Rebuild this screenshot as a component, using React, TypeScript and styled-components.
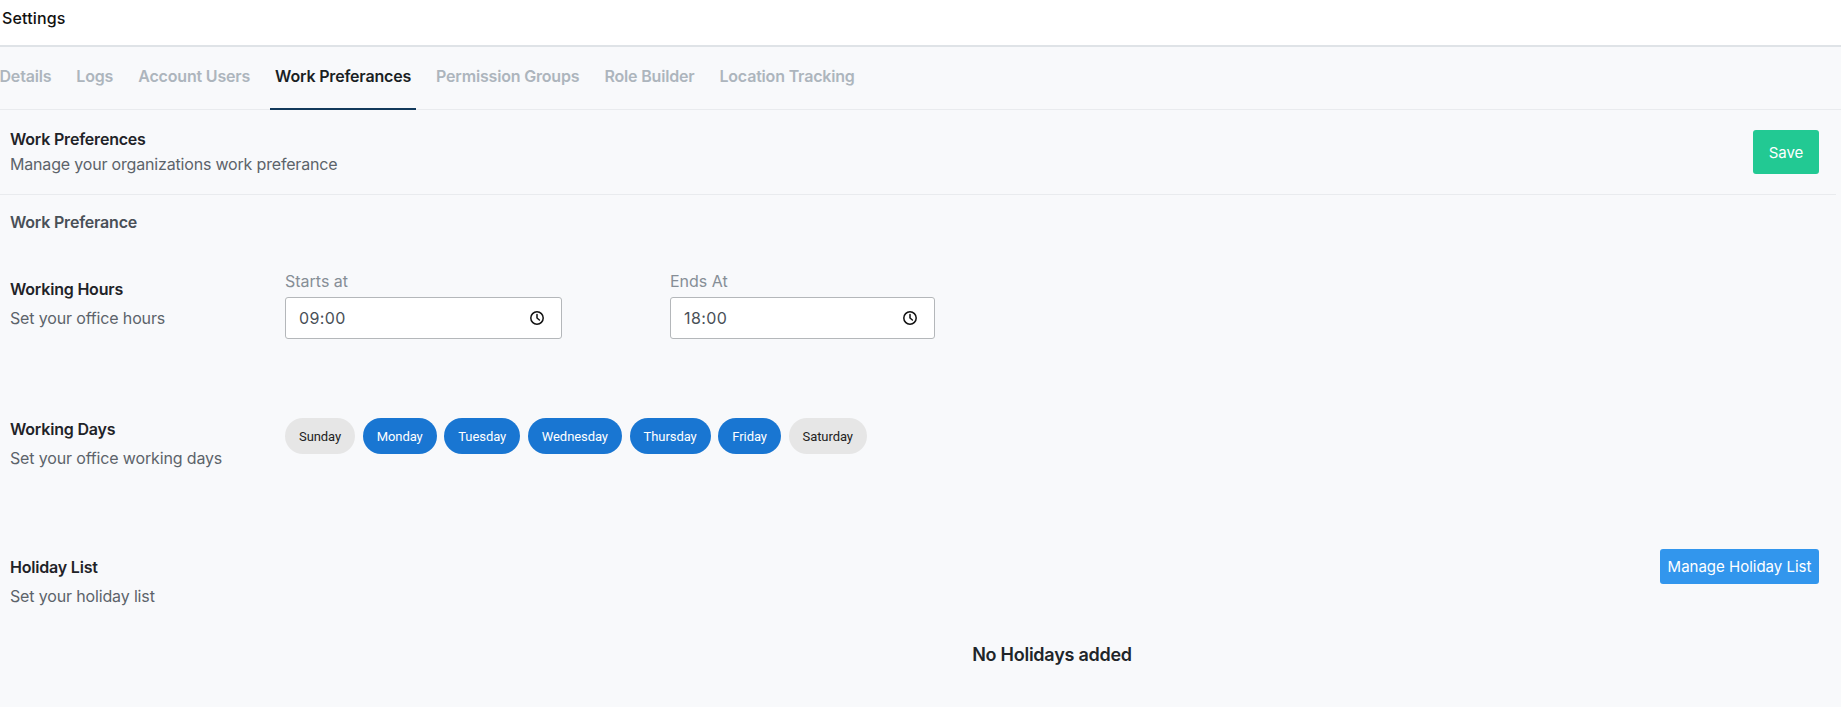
import styled, { createGlobalStyle } from 'styled-components';

const tabs = ['Details', 'Logs', 'Account Users', 'Work Preferances', 'Permission Groups', 'Role Builder', 'Location Tracking'];

const days = [
    { label: 'Sunday', on: false },
    { label: 'Monday', on: true },
    { label: 'Tuesday', on: true },
    { label: 'Wednesday', on: true },
    { label: 'Thursday', on: true },
    { label: 'Friday', on: true },
    { label: 'Saturday', on: false },
];

const ClockIcon = () => (
    <svg width="16" height="16" viewBox="0 0 16 16" fill="none" stroke="#111" strokeWidth="1.5" strokeLinecap="round" strokeLinejoin="round">
        <circle cx="8" cy="8" r="6.2" />
        <path d="M8 4.4V8l2.4 2" />
    </svg>
);

const App = () => (
    <Page>
        <GlobalStyle />
        <Header>Settings</Header>
        <TabBar>
            {tabs.map((tab) => (
                <Tab key={tab} $active={tab === 'Work Preferances'}>
                    {tab}
                </Tab>
            ))}
        </TabBar>
        <TopRow>
            <div>
                <Title>Work Preferences</Title>
                <Subtitle>Manage your organizations work preferance</Subtitle>
            </div>
            <SaveButton>Save</SaveButton>
        </TopRow>
        <Body>
            <SectionName>Work Preferance</SectionName>
            <HoursRow>
                <RowInfo>
                    <Title>Working Hours</Title>
                    <RowText>Set your office hours</RowText>
                </RowInfo>
                <TimeGroup>
                    <TimeColumn $width={277}>
                        <FieldLabel>Starts at</FieldLabel>
                        <TimeField>
                            09:00
                            <ClockIcon />
                        </TimeField>
                    </TimeColumn>
                    <TimeColumn $width={265}>
                        <FieldLabel>Ends At</FieldLabel>
                        <TimeField>
                            18:00
                            <ClockIcon />
                        </TimeField>
                    </TimeColumn>
                </TimeGroup>
            </HoursRow>
            <DaysRow>
                <RowInfo>
                    <Title>Working Days</Title>
                    <RowText>Set your office working days</RowText>
                </RowInfo>
                <DayList>
                    {days.map((day) => (
                        <DayChip key={day.label} $on={day.on}>
                            {day.label}
                        </DayChip>
                    ))}
                </DayList>
            </DaysRow>
            <HolidayRow>
                <RowInfo>
                    <Title>Holiday List</Title>
                    <RowText>Set your holiday list</RowText>
                </RowInfo>
                <ManageButton>Manage Holiday List</ManageButton>
            </HolidayRow>
            <EmptyNote>No Holidays added</EmptyNote>
        </Body>
    </Page>
);

export default App;

const GlobalStyle = createGlobalStyle`
    html, body {
        margin: 0;
        padding: 0;
        background: #f8f9fb;
    }
    * {
        box-sizing: border-box;
    }
`;

const Page = styled.div`
    width: 1841px;
    height: 707px;
    overflow: hidden;
    background: #f8f9fb;
    font-family: Inter, "Liberation Sans", sans-serif;
    color: #1f2328;
`;

const Header = styled.div`
    height: 47px;
    padding: 7px 2px 0;
    background: #fff;
    border-bottom: 2px solid #dfe3e7;
    font-size: 16px;
    font-weight: 500;
    letter-spacing: 0.15px;
    line-height: 22px;
    color: #111;
`;

const TabBar = styled.div`
    display: flex;
    gap: 15px;
    height: 63px;
    margin-left: -5.5px;
    border-bottom: 1px solid #e9ebee;
`;

const Tab = styled.div<{ $active: boolean }>`
    padding: 0 5px;
    height: 63px;
    line-height: 58px;
    font-size: 16px;
    font-weight: 600;
    letter-spacing: -0.18px;
    color: ${(p) => (p.$active ? '#1a1f24' : '#adb5bd')};
    border-bottom: 2px solid ${(p) => (p.$active ? '#12395b' : 'transparent')};
`;

const TopRow = styled.div`
    display: flex;
    justify-content: space-between;
    align-items: flex-start;
    height: 85px;
    width: 1836px;
    padding: 17px 17px 0 10px;
    border-bottom: 1px solid #e9ebee;
`;

const Title = styled.div`
    font-size: 16px;
    font-weight: 600;
    letter-spacing: -0.2px;
    line-height: 24px;
    color: #1f2328;
`;

const Subtitle = styled.div`
    margin-top: 1px;
    font-size: 16px;
    letter-spacing: -0.18px;
    line-height: 24px;
    color: #5c636a;
`;

const SaveButton = styled.button`
    width: 66px;
    height: 44px;
    margin-top: 3px;
    border: 0;
    border-radius: 3px;
    background: #22c993;
    color: #fff;
    font: 400 15px Inter, sans-serif;
`;

const Body = styled.div`
    padding: 0 22px 0 10px;
`;

const SectionName = styled.div`
    margin-top: 15px;
    font-size: 16px;
    font-weight: 600;
    letter-spacing: -0.2px;
    line-height: 24px;
    color: #495057;
`;

const HoursRow = styled.div`
    display: flex;
    margin-top: 30px;
    height: 140px;
`;

const DaysRow = styled.div`
    display: flex;
    height: 138px;
`;

const HolidayRow = styled.div`
    display: flex;
    justify-content: space-between;
    align-items: flex-start;
`;

const RowInfo = styled.div`
    width: 275px;
    flex: none;
    padding-top: 13px;
`;

const RowText = styled.div`
    margin-top: 5px;
    font-size: 16px;
    letter-spacing: -0.15px;
    line-height: 24px;
    color: #5c636a;
`;

const TimeGroup = styled.div`
    display: flex;
    gap: 108px;
    padding-top: 5px;
`;

const TimeColumn = styled.div<{ $width: number }>`
    width: ${(p) => p.$width}px;
`;

const FieldLabel = styled.div`
    font-size: 16px;
    line-height: 24px;
    margin-bottom: 4px;
    color: #868e96;
`;

const TimeField = styled.div`
    display: flex;
    justify-content: space-between;
    align-items: center;
    height: 42px;
    padding: 0 16px 0 13px;
    background: #fff;
    border: 1px solid #b4b7ba;
    border-radius: 3px;
    font-size: 16px;
    letter-spacing: 0.4px;
    color: #495057;
`;

const DayList = styled.div`
    display: flex;
    gap: 7.6px;
    height: 36px;
    margin-top: 14px;
`;

const DayChip = styled.div<{ $on: boolean }>`
    display: flex;
    align-items: center;
    height: 36px;
    padding: 0 14px;
    border-radius: 18px;
    font-family: Roboto, sans-serif;
    font-size: 13px;
    letter-spacing: -0.07px;
    background: ${(p) => (p.$on ? '#1976d2' : '#e6e6e6')};
    color: ${(p) => (p.$on ? '#fff' : '#222')};
`;

const ManageButton = styled.button`
    width: 159px;
    height: 35px;
    margin-top: 7px;
    padding: 0;
    border: 0;
    border-radius: 3px;
    background: #3296ed;
    color: #fff;
    font: 400 15px Inter, sans-serif;
`;

const EmptyNote = styled.div`
    margin-top: 33px;
    text-align: center;
    padding-left: 275px;
    font-size: 18px;
    font-weight: 600;
    letter-spacing: -0.25px;
    line-height: 27px;
    color: #212529;
`;
